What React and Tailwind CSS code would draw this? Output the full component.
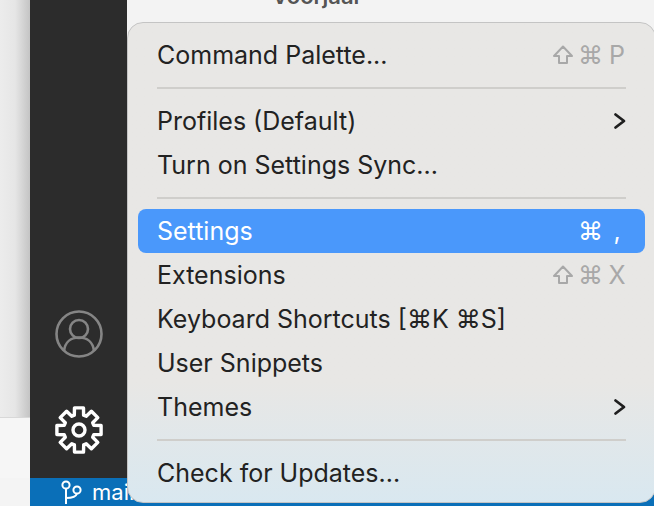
const FONT = "font-['Inter','Liberation_Sans',sans-serif]";

// builds the 8 tooth gear outline of the activity bar
const gearPath = () => {
  const pts = [];
  for (let i = 0; i < 8; i++) {
    const a = (i * Math.PI) / 4 - Math.PI / 2;
    const at = (d, r) => {
      const t = a + d;
      return `${(24 + r * Math.cos(t)).toFixed(1)} ${(24 + r * Math.sin(t)).toFixed(1)}`;
    };
    pts.push(at(-0.2, 22.5), at(0.2, 22.5), at(0.3, 15.5), at(0.48, 15.5));
  }
  return `M${pts.join("L")}Z`;
};

const Gear = () => (
  <svg width="48" height="48" viewBox="0 0 48 48" fill="none" stroke="#fff" strokeWidth="3.4" strokeLinejoin="round">
    <path d={gearPath()} />
    <circle cx="24" cy="24" r="6" />
  </svg>
);

const Account = () => (
  <svg width="48" height="48" viewBox="0 0 48 48" fill="none" stroke="#858585" strokeWidth="2.6">
    <circle cx="24" cy="24" r="22.5" />
    <circle cx="24" cy="19" r="9" />
    <path d="M9 41c1-9 7-13.5 15-13.5S38 32 39 41" />
  </svg>
);

const Branch = () => (
  <svg width="24" height="24" viewBox="0 0 24 24" fill="none" stroke="#fff" strokeWidth="2">
    <circle cx="6" cy="5" r="3.6" />
    <circle cx="17" cy="10" r="3.6" />
    <path d="M6 9v15M6 18c6 0 10-1 11-4.500" />
  </svg>
);

const Chevron = () => (
  <svg width="14" height="18" viewBox="0 0 14 18" fill="none" stroke="#1f1f1f" strokeWidth="2.8" strokeLinecap="round" strokeLinejoin="round">
    <path d="M2.500 2.500 11 9l-8.500 6.500" />
  </svg>
);

const Shift = ({ color }) => (
  <svg width="22" height="20" viewBox="0 0 22 20" fill="none" stroke={color} strokeWidth="2" strokeLinejoin="round">
    <path d="M11 1.500 20 11h-5v7H7v-7H2z" />
  </svg>
);

const Shortcut = ({ shift, k, active }) => {
  const color = active ? "#ffffff" : "#a8a8a8";
  return (
    <span className={`flex items-center gap-1 text-[25px] ${active ? "text-white" : "text-[#a8a8a8]"}`}>
      {shift && <Shift color={color} />}
      <span>⌘</span>
      <span className="w-[20px] text-center">{k}</span>
    </span>
  );
};

const Row = ({ label, children, active }) => (
  <div
    className={`mx-[10px] flex h-[44px] items-center justify-between rounded-[8px] pl-[19px] pr-[18px] ${
      active ? "bg-[#4a98fb] text-white" : "text-[#222222]"
    }`}
  >
    <span className="whitespace-nowrap">{label}</span>
    {children}
  </div>
);

const Sep = () => (
  <div className="flex h-[22px] items-center px-[29px]">
    <div className="h-[2px] w-full bg-[#cfcecb]" />
  </div>
);

export default function App() {
  return (
    <div className={`relative flex h-[506px] w-[654px] flex-col overflow-hidden bg-[#f4f4f4] ${FONT}`}>
      <div className="flex min-h-0 flex-1">
        {/* page behind the window */}
        <div className="flex w-[30px] flex-col">
          <div className="h-[418px] border-b border-[#d8d8d8] bg-gradient-to-r from-[#ececec] via-[#e6e6e6] to-[#c4c4c4]" />
          <div className="flex-1 bg-[#f6f6f6]" />
        </div>
        {/* activity bar */}
        <div className="flex w-[97px] flex-col items-center justify-end bg-[#2c2c2c]">
          <Account />
          <div className="mt-[48px] mb-[24px]">
            <Gear />
          </div>
        </div>
        <div className="flex-1 bg-[#f3f3f3] pl-[145px] text-[22px] font-semibold leading-[0] text-[#555555]">
          <span className="relative top-[-4px]">Voorjaar</span>
        </div>
      </div>
      {/* status bar */}
      <div className="ml-[30px] flex h-[28px] items-center gap-2 bg-[#0a6fb8] pl-[30px] text-[22px] leading-none text-white">
        <Branch />
        <span>main</span>
      </div>

      {/* the open menu */}
      <div className="absolute top-[22px] left-[127px] h-[481px] w-[529px] rounded-[16px] border border-[#c4c4c4] bg-gradient-to-b from-[#e8e7e5] from-75% to-[#d9e8f0] pt-[10px] text-[25px] leading-none">
        <Row label="Command Palette...">
          <Shortcut shift k="P" />
        </Row>
        <Sep />
        <Row label="Profiles (Default)">
          <Chevron />
        </Row>
        <Row label="Turn on Settings Sync..." />
        <Sep />
        <Row label="Settings" active>
          <Shortcut k="," active />
        </Row>
        <Row label="Extensions">
          <Shortcut shift k="X" />
        </Row>
        <Row label="Keyboard Shortcuts [⌘K ⌘S]" />
        <Row label="User Snippets" />
        <Row label="Themes">
          <Chevron />
        </Row>
        <Sep />
        <Row label="Check for Updates..." />
      </div>
    </div>
  );
}
